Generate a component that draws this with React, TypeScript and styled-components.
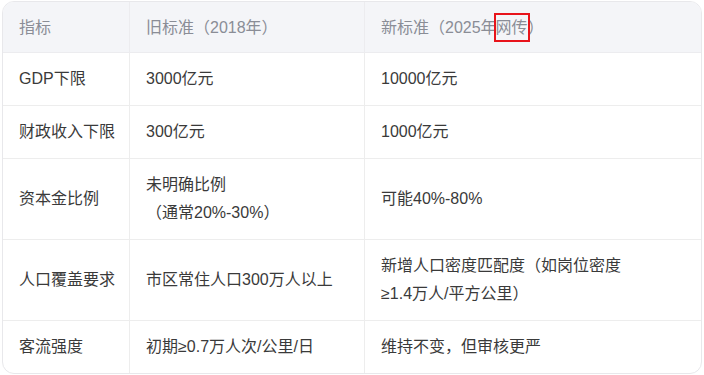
import styled, { createGlobalStyle } from "styled-components";
import { FC, ReactNode } from "react";

const Global = createGlobalStyle`
  body {
    margin: 0;
    background: #ffffff;
    font-family: "Liberation Sans", "Noto Sans CJK SC", sans-serif;
  }
`;

const TableCard = styled.div`
  margin: 1px 2px 0 2px;
  width: 700px;
  border: 1px solid #e8e8eb;
  border-radius: 12px;
  overflow: hidden;
  box-sizing: border-box;
`;
const Table = styled.table`
  width: 100%;
  border-collapse: separate;
  border-spacing: 0;
  table-layout: fixed;
  font-size: 16px;
  line-height: 28px;
`;
const Col = styled.col<{ $w?: number }>`
  width: ${p => (p.$w ? `${p.$w}px` : "auto")};
`;
const HeadCell = styled.th`
  background: #f4f5f8;
  color: #8a8d96;
  font-weight: 400;
  text-align: left;
  padding: 12px 8px 10px 16px;
  border-bottom: 1px solid #ececef;
  border-right: 1px solid #ececef;
  white-space: nowrap;

  &:last-child {
    border-right: none;
  }
`;
const Cell = styled.td`
  color: #3a3a3a;
  padding: 12px 8px 12px 16px;
  vertical-align: middle;
  border-bottom: 1px solid #ededed;
  border-right: 1px solid #ededed;

  &:first-child {
    white-space: nowrap;
  }
  &:last-child {
    border-right: none;
  }
  tr:last-child > & {
    border-bottom: none;
  }
`;
const Mark = styled.span`
  padding: 4px 0;
  outline: 2px solid #e8141b;
  outline-offset: 0;
  margin-left: -1px;
`;

const rows: ReactNode[][] = [
  ["GDP下限", "3000亿元", "10000亿元"],
  ["财政收入下限", "300亿元", "1000亿元"],
  ["资本金比例", <>未明确比例<br />（通常20%-30%）</>, "可能40%-80%"],
  ["人口覆盖要求", "市区常住人口300万人以上", <>新增人口密度匹配度（如岗位密度<br />≥1.4万人/平方公里）</>],
  ["客流强度", "初期≥0.7万人次/公里/日", "维持不变，但审核更严"],
];

const App: FC = () => {
  return (
    <>
      <Global />
      <TableCard>
        <Table>
          <colgroup>
            <Col $w={127} />
            <Col $w={235} />
            <Col />
          </colgroup>
          <thead>
            <tr>
              <HeadCell>指标</HeadCell>
              <HeadCell>旧标准（2018年）</HeadCell>
              <HeadCell>新标准（2025年<Mark>网传</Mark>）</HeadCell>
            </tr>
          </thead>
          <tbody>
            {rows.map((r, i) => (
              <tr key={i}>
                {r.map((c, j) => <Cell key={j}>{c}</Cell>)}
              </tr>
            ))}
          </tbody>
        </Table>
      </TableCard>
    </>
  );
};

export default App;
